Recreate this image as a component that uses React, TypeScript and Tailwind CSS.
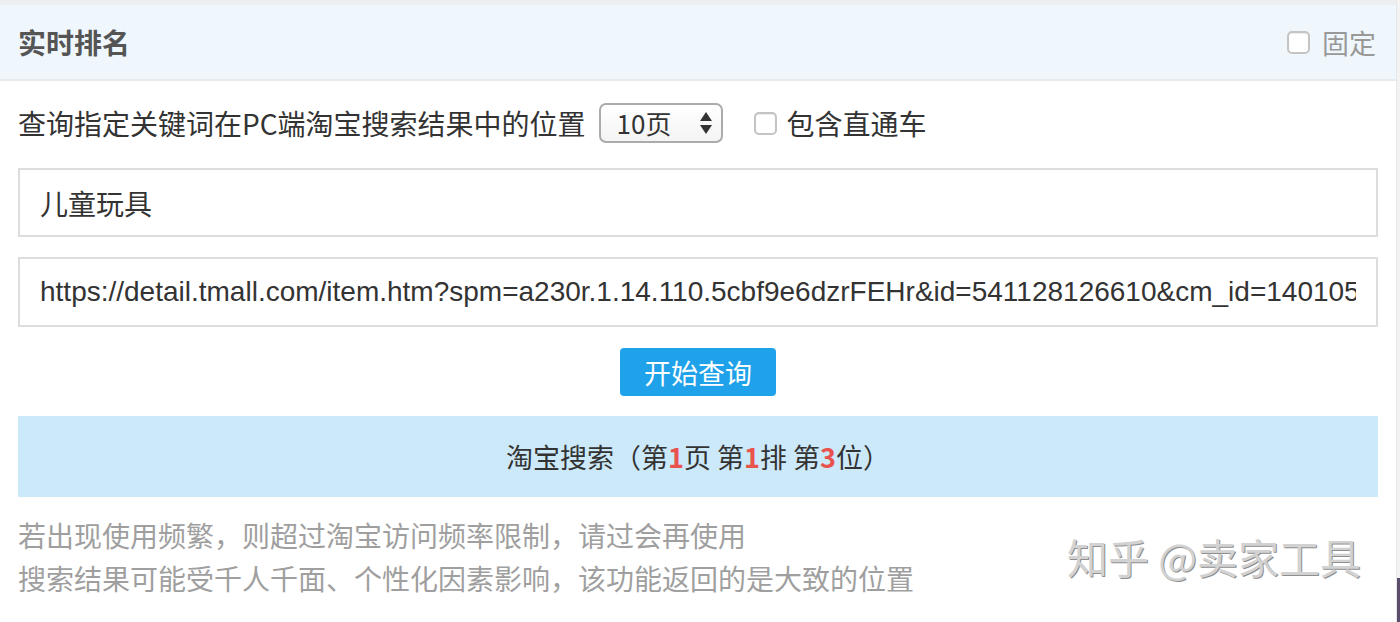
import { useState } from "react";

const cjk = "font-['Noto_Sans_CJK_SC','Noto_Sans',sans-serif]";

function Box({ checked, onChange }: { checked: boolean; onChange: () => void }) {
  return (
    <span
      onClick={onChange}
      className={`inline-block w-[23px] h-[23px] rounded-[5px] border-2 border-[#c4c4c4] bg-white shadow-[inset_0_1px_1px_rgba(0,0,0,0.08)] ${
        checked ? "bg-[#1ea0e8]" : ""
      }`}
    />
  );
}

export default function App() {
  const [pinned, setPinned] = useState(false);
  const [withAds, setWithAds] = useState(false);
  const [keyword, setKeyword] = useState("儿童玩具");
  const [url, setUrl] = useState(
    "https://detail.tmall.com/item.htm?spm=a230r.1.14.110.5cbf9e6dzrFEHr&id=541128126610&cm_id=140105"
  );

  return (
    <div className={`relative w-[1400px] h-[622px] bg-[#f3f3f3] overflow-hidden ${cjk}`}>
      <div className="w-[1397px] h-full bg-white border-t-[5px] border-[#eceef0] border-r border-r-[#e6e6e6]">
        {/* Header */}
        <div className="h-[76px] bg-[#eff7fd] border-b-2 border-[#e6eaee] flex items-center justify-between pl-[18px] pr-[20px]">
          <h1 className="text-[28px] font-bold text-[#555] leading-none">实时排名</h1>
          <label className="flex items-center gap-[12px] text-[27px] text-[#999] leading-none">
            <Box checked={pinned} onChange={() => setPinned(!pinned)} />
            固定
          </label>
        </div>

        <div className="px-[18px] pt-[22px]">
          {/* Query options */}
          <div className="flex items-center h-[40px] text-[28px] text-[#333] leading-none">
            <span>查询指定关键词在PC端淘宝搜索结果中的位置</span>
            <div className="ml-[13px] w-[124px] h-[40px] rounded-[7px] border-2 border-[#ababab] bg-gradient-to-b from-white to-[#f4f4f4] flex items-center justify-between pl-[16px] pr-[8px]">
              <span className="text-[26px]">10页</span>
              <svg width="14" height="26" viewBox="0 0 14 26">
                <path d="M7 2 L13 11 L1 11 Z" fill="#333" />
                <path d="M1 15 L13 15 L7 24 Z" fill="#333" />
              </svg>
            </div>
            <label className="ml-[31px] flex items-center gap-[10px]">
              <Box checked={withAds} onChange={() => setWithAds(!withAds)} />
              包含直通车
            </label>
          </div>

          {/* Inputs */}
          <div className="mt-[25px] flex flex-col gap-[20px]">
            <input
              value={keyword}
              onChange={(e) => setKeyword(e.target.value)}
              className="w-full h-[69px] border-2 border-[#dddddd] px-[20px] text-[28px] text-[#333] outline-none"
            />
            <input
              value={url}
              onChange={(e) => setUrl(e.target.value)}
              className="w-full h-[70px] border-2 border-[#dddddd] px-[20px] text-[28px] text-[#333] outline-none font-['Liberation_Sans',Arial,sans-serif]"
            />
          </div>

          {/* Submit */}
          <div className="mt-[21px] flex justify-center">
            <button className="w-[156px] h-[48px] rounded-[4px] bg-[#1fa2e9] text-white text-[27px] leading-none">
              开始查询
            </button>
          </div>

          {/* Result */}
          <div className="mt-[20px] h-[81px] bg-[#cce9f9] flex items-center justify-center text-[27px] text-[#333] leading-none">
            淘宝搜索（第<b className="text-[#e8534e]">1</b>页 第<b className="text-[#e8534e]">1</b>排 第
            <b className="text-[#e8534e]">3</b>位）
          </div>

          {/* Notes */}
          <div className="mt-[17px] text-[28px] leading-[43px] text-[#9f9f9f]">
            <p>若出现使用频繁，则超过淘宝访问频率限制，请过会再使用</p>
            <p>搜索结果可能受千人千面、个性化因素影响，该功能返回的是大致的位置</p>
          </div>
        </div>
      </div>

      {/* Watermark */}
      <div className="absolute left-[1067px] top-[536px] text-[41px] leading-none text-[#d2d2d2] [text-shadow:1px_1px_0_#8f8f8f] whitespace-nowrap">
        知乎 @卖家工具
      </div>
      <div className="absolute right-0 top-[578px] w-[3px] h-[44px] bg-[#5d4d6d]" />
    </div>
  );
}
